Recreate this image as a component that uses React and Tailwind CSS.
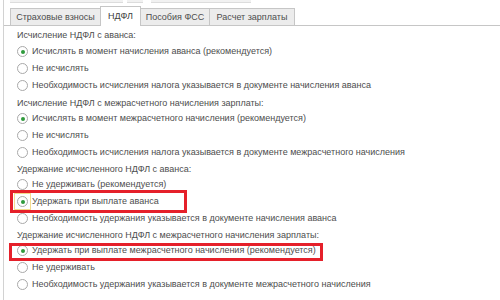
import React from "react";

function Radio({ checked, focus }) {
  const circle = (
    <span className="w-[11px] h-[11px] rounded-full border border-[#a9a9a9] bg-white flex items-center justify-center shrink-0">
      {checked && <span className="w-[4px] h-[4px] rounded-full bg-[#2f9a3c]" />}
    </span>
  );
  if (focus) {
    return (
      <span className="ml-[-3px] mr-[-3px] p-[2px] border border-[#f3dc8e] flex items-center">
        {circle}
      </span>
    );
  }
  return circle;
}

function Row({ label, checked, focus }) {
  return (
    <div className="h-[17px] flex items-center gap-[4px] pl-[13px]">
      <Radio checked={checked} focus={focus} />
      <span className="whitespace-nowrap">{label}</span>
    </div>
  );
}

function Heading({ children, cls }) {
  return (
    <div className={"flex items-center pl-[13px] whitespace-nowrap " + cls}>{children}</div>
  );
}

function Tab({ label, active, w }) {
  if (active) {
    return (
      <div
        className={"h-[20px] mb-[-1px] bg-white border border-b-0 border-[#c6c6c6] flex items-center justify-center text-[#404040] " + w}
      >
        {label}
      </div>
    );
  }
  return (
    <div
      className={"h-[17px] bg-[#ececec] border border-b-0 border-[#c6c6c6] flex items-center justify-center text-[#4d4d4d] " + w}
    >
      {label}
    </div>
  );
}

export default function App() {
  return (
    <div className="w-[500px] h-[300px] bg-white overflow-hidden relative pl-[3px] text-[9px] leading-none text-[#4d4d4d] font-['Liberation_Sans',Arial,sans-serif]">
      <div className="h-full border-l border-[#d2d2d2] flex flex-col">
        <div className="h-[4px] flex pl-[6px] gap-[4px]">
          <div className="w-[113px] h-[3px] bg-[#f1f1f1] border-b border-[#dcdcdc]" />
          <div className="w-[16px] h-[3px] bg-[#f1f1f1] border-b border-[#dcdcdc]" />
          <div className="w-[100px] h-[3px] bg-[#f1f1f1] border-b border-[#dcdcdc] ml-[4px]" />
        </div>
        <div className="mt-[2px] h-[20px] flex items-end pl-[6px] border-b border-[#c6c6c6]">
          <Tab label="Страховые взносы" w="w-[91px]" />
          <Tab label="НДФЛ" active w="w-[41px] ml-[-1px]" />
          <Tab label="Пособия ФСС" w="w-[70px] ml-[-1px]" />
          <Tab label="Расчет зарплаты" w="w-[86px] ml-[-1px]" />
        </div>

        <Heading cls="mt-[1px] h-[16px]">Исчисление НДФЛ с аванса:</Heading>
        <Row checked label="Исчислять в момент начисления аванса (рекомендуется)" />
        <Row label="Не исчислять" />
        <Row label="Необходимость исчисления налога указывается в документе начисления аванса" />

        <Heading cls="mt-[2px] h-[14px]">Исчисление НДФЛ с межрасчетного начисления зарплаты:</Heading>
        <Row checked label="Исчислять в момент межрасчетного начисления (рекомендуется)" />
        <Row label="Не исчислять" />
        <Row label="Необходимость исчисления налога указывается в документе межрасчетного начисления" />

        <Heading cls="mt-[1px] h-[14px]">Удержание исчисленного НДФЛ с аванса:</Heading>
        <Row label="Не удерживать (рекомендуется)" />
        <Row checked focus label="Удержать при выплате аванса" />
        <Row label="Необходимость удержания указывается в документе начисления аванса" />

        <Heading cls="mt-[1px] h-[14px]">Удержание исчисленного НДФЛ с межрасчетного начисления зарплаты:</Heading>
        <Row checked label="Удержать при выплате межрасчетного начисления (рекомендуется)" />
        <Row label="Не удерживать" />
        <Row label="Необходимость удержания указывается в документе межрасчетного начисления" />
      </div>

      <div className="absolute left-[10px] top-[190px] w-[177px] h-[23px] border-[3px] border-[#e5202a]" />
      <div className="absolute left-[9px] top-[243px] w-[314px] h-[18px] border-[3px] border-[#e5202a]" />
    </div>
  );
}
